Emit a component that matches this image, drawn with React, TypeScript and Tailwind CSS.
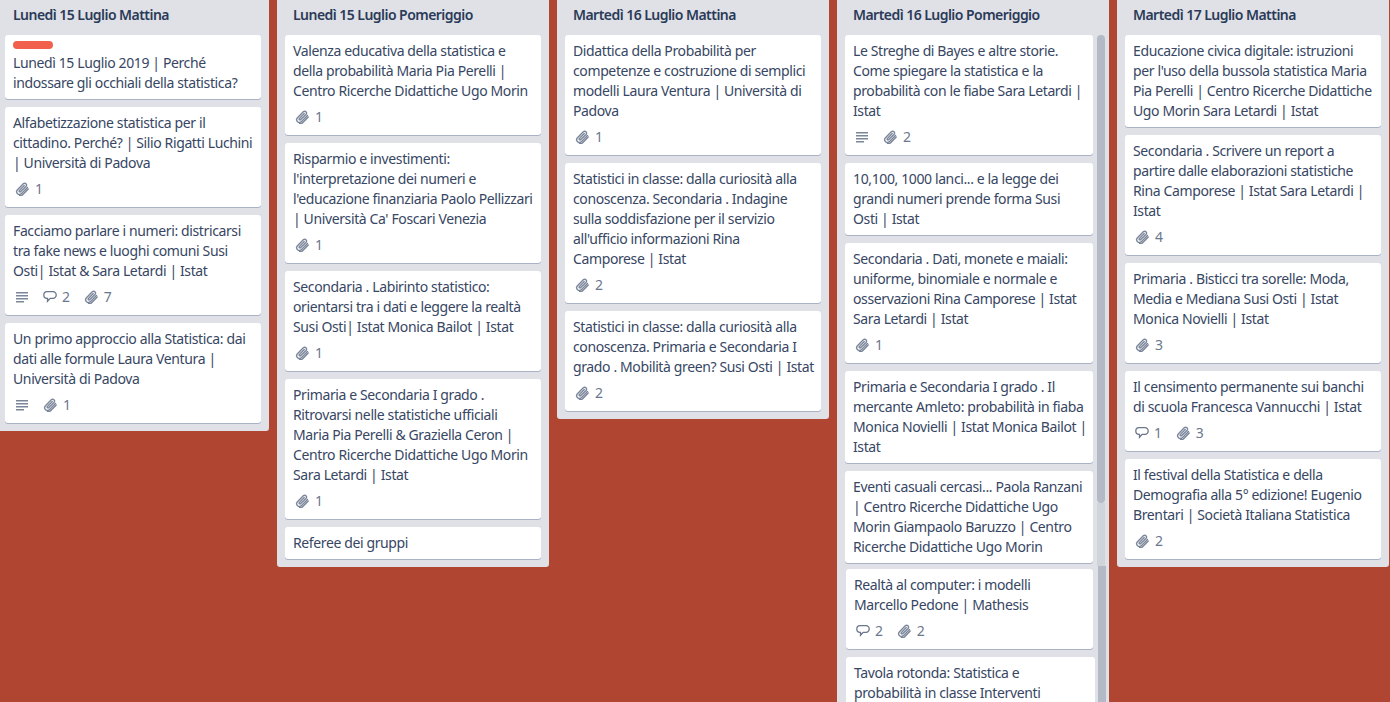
type Card = {
  text: string[];
  label?: boolean;
  desc?: boolean;
  comments?: number;
  files?: number;
  // the reference is two screenshots stitched together, these cards sit past the seam
  shifted?: boolean;
  wide?: boolean;
};

type Col = { title: string; cards: Card[]; scroll?: boolean };

const cols: Col[] = [
  {
    title: "Lunedì 15 Luglio Mattina",
    cards: [
      { label: true, text: ["Lunedì 15 Luglio 2019 | Perché", "indossare gli occhiali della statistica?"] },
      { text: ["Alfabetizzazione statistica per il", "cittadino. Perché? | Silio Rigatti Luchini", "| Università di Padova"], files: 1 },
      { text: ["Facciamo parlare i numeri: districarsi", "tra fake news e luoghi comuni Susi", "Osti| Istat & Sara Letardi | Istat"], desc: true, comments: 2, files: 7 },
      { text: ["Un primo approccio alla Statistica: dai", "dati alle formule Laura Ventura |", "Università di Padova"], desc: true, files: 1 },
    ],
  },
  {
    title: "Lunedì 15 Luglio Pomeriggio",
    cards: [
      { text: ["Valenza educativa della statistica e", "della probabilità Maria Pia Perelli |", "Centro Ricerche Didattiche Ugo Morin"], files: 1 },
      { text: ["Risparmio e investimenti:", "l'interpretazione dei numeri e", "l'educazione finanziaria Paolo Pellizzari", "| Università Ca' Foscari Venezia"], files: 1 },
      { text: ["Secondaria . Labirinto statistico:", "orientarsi tra i dati e leggere la realtà", "Susi Osti| Istat Monica Bailot | Istat"], files: 1 },
      { text: ["Primaria e Secondaria I grado .", "Ritrovarsi nelle statistiche ufficiali", "Maria Pia Perelli & Graziella Ceron |", "Centro Ricerche Didattiche Ugo Morin", "Sara Letardi | Istat"], files: 1 },
      { text: ["Referee dei gruppi"] },
    ],
  },
  {
    title: "Martedì 16 Luglio Mattina",
    cards: [
      { text: ["Didattica della Probabilità per", "competenze e costruzione di semplici", "modelli Laura Ventura | Università di", "Padova"], files: 1 },
      { text: ["Statistici in classe: dalla curiosità alla", "conoscenza. Secondaria . Indagine", "sulla soddisfazione per il servizio", "all'ufficio informazioni Rina", "Camporese | Istat"], files: 2 },
      { text: ["Statistici in classe: dalla curiosità alla", "conoscenza. Primaria e Secondaria I", "grado . Mobilità green? Susi Osti | Istat"], files: 2 },
    ],
  },
  {
    title: "Martedì 16 Luglio Pomeriggio",
    scroll: true,
    cards: [
      { text: ["Le Streghe di Bayes e altre storie.", "Come spiegare la statistica e la", "probabilità con le fiabe Sara Letardi |", "Istat"], desc: true, files: 2 },
      { text: ["10,100, 1000 lanci... e la legge dei", "grandi numeri prende forma Susi", "Osti | Istat"] },
      { text: ["Secondaria . Dati, monete e maiali:", "uniforme, binomiale e normale e", "osservazioni Rina Camporese | Istat", "Sara Letardi | Istat"], files: 1 },
      { text: ["Primaria e Secondaria I grado . Il", "mercante Amleto: probabilità in fiaba", "Monica Novielli | Istat Monica Bailot |", "Istat"] },
      { text: ["Eventi casuali cercasi... Paola Ranzani", "| Centro Ricerche Didattiche Ugo", "Morin Giampaolo Baruzzo | Centro", "Ricerche Didattiche Ugo Morin"] },
      { text: ["Realtà al computer: i modelli", "Marcello Pedone | Mathesis"], comments: 2, files: 2, shifted: true },
      { text: ["Tavola rotonda: Statistica e", "probabilità in classe Interventi"], shifted: true, wide: true },
    ],
  },
  {
    title: "Martedì 17 Luglio Mattina",
    cards: [
      { text: ["Educazione civica digitale: istruzioni", "per l'uso della bussola statistica Maria", "Pia Perelli | Centro Ricerche Didattiche", "Ugo Morin Sara Letardi | Istat"] },
      { text: ["Secondaria . Scrivere un report a", "partire dalle elaborazioni statistiche", "Rina Camporese | Istat Sara Letardi |", "Istat"], files: 4 },
      { text: ["Primaria . Bisticci tra sorelle: Moda,", "Media e Mediana Susi Osti | Istat", "Monica Novielli | Istat"], files: 3 },
      { text: ["Il censimento permanente sui banchi", "di scuola Francesca Vannucchi | Istat"], comments: 1, files: 3 },
      { text: ["Il festival della Statistica e della", "Demografia alla 5° edizione! Eugenio", "Brentari | Società Italiana Statistica"], files: 2 },
    ],
  },
];

const Desc = () => (
  <svg width="14" height="12" viewBox="0 0 14 12" fill="#7a869a">
    <rect x="1" y="1" width="12" height="1.5" />
    <rect x="1" y="4" width="12" height="1.5" />
    <rect x="1" y="7" width="12" height="1.5" />
    <rect x="1" y="10" width="8" height="1.5" />
  </svg>
);

const Bubble = () => (
  <svg width="14" height="14" viewBox="0 0 14 14" fill="none" stroke="#6b778c" strokeWidth="1.3">
    <path d="M4 1.7h6a3.2 3.2 0 0 1 3.2 3.3A3.2 3.2 0 0 1 10 8.3H7.2l-2.7 3V8.3H4A3.3 3.3 0 0 1 .8 5 3.3 3.3 0 0 1 4 1.7z" />
  </svg>
);

const Clip = () => (
  <svg width="14" height="14" viewBox="0 0 14 14" fill="none" stroke="#7a869a" strokeWidth="1.4" strokeLinecap="round">
    <path d="M12.5 5.6 6.6 11.6a2.8 2.8 0 0 1-4.1-3.9l6-6.1a1.9 1.9 0 0 1 2.7 2.6L5.6 9.8a.9.9 0 0 1-1.3-1.2l4.9-5.1" />
    <path d="M13.2 6.9 7.9 12.4a3.6 3.6 0 0 1-3.4 1" />
  </svg>
);

function CardView({ card }: { card: Card }) {
  const hasBadges = card.desc || card.comments || card.files;
  let cls = "mb-2 rounded-[3px] bg-white px-2 pt-1.5 shadow-[0_1px_0_#a9b3c5]";
  if (card.shifted) cls = "mb-2 ml-px rounded-[3px] bg-white px-2 pt-1.5 shadow-[0_1px_0_#a9b3c5]";
  if (card.wide) cls = "ml-px -mr-[2px] rounded-[3px] bg-white px-2 pt-1.5";
  return (
    <div className={cls}>
      {card.label && <div className="mb-1 h-2 w-10 rounded bg-[#f0604c]" />}
      <div className={hasBadges ? "pb-0.5" : "pb-1.5"}>
        {card.text.map((line) => (
          <div key={line} className="whitespace-nowrap">{line}</div>
        ))}
      </div>
      {hasBadges && (
        <div className="flex h-8 items-center gap-3.5 pb-1 pl-0.5 text-[#6b778c]">
          {card.desc && <Desc />}
          {card.comments && (
            <span className="flex items-center gap-[5px]"><Bubble />{card.comments}</span>
          )}
          {card.files && (
            <span className="flex items-center gap-1.5"><Clip />{card.files}</span>
          )}
        </div>
      )}
    </div>
  );
}

export default function App() {
  return (
    <div
      className="flex h-[702px] w-[1390px] items-start overflow-hidden bg-[#b04632] text-[14px] leading-5 tracking-[-0.38px] text-[#374663]"
      style={{ fontFamily: '"Noto Sans", sans-serif' }}
    >
      <div className="-ml-[3px] flex items-start gap-2">
        {cols.map((col) => (
          <section
            key={col.title}
            className={col.scroll ? "h-[702px] w-[272px] shrink-0 overflow-hidden bg-[#dfe1e6]" : "w-[272px] shrink-0 rounded-b-[3px] bg-[#dfe1e6]"}
          >
            <h2 className="flex h-[35px] items-center px-4 pb-1.5 font-semibold tracking-[-0.54px] text-[#2a3a58]">{col.title}</h2>
            {col.scroll ? (
              <div className="flex">
                <div className="ml-2 w-[248px] shrink-0">
                  {col.cards.slice(0, 5).map((c) => <CardView key={c.text[0]} card={c} />)}
                  {/* seam: next card starts 2px early */}
                  <div className="-mt-[2px]">
                    {col.cards.slice(5).map((c) => <CardView key={c.text[0]} card={c} />)}
                  </div>
                </div>
                <div className="ml-1 flex h-[667px] w-2 shrink-0 flex-col">
                  <div className="h-[468px] rounded-[4px] bg-[#b3bac5]" />
                  <div className="h-[63px] bg-[#cfd3da]" />
                  <div className="ml-px h-[136px] w-2 bg-[#b3bac5]" />
                </div>
              </div>
            ) : (
              <div className="px-2">
                {col.cards.map((c) => <CardView key={c.text[0]} card={c} />)}
              </div>
            )}
          </section>
        ))}
      </div>
    </div>
  );
}
